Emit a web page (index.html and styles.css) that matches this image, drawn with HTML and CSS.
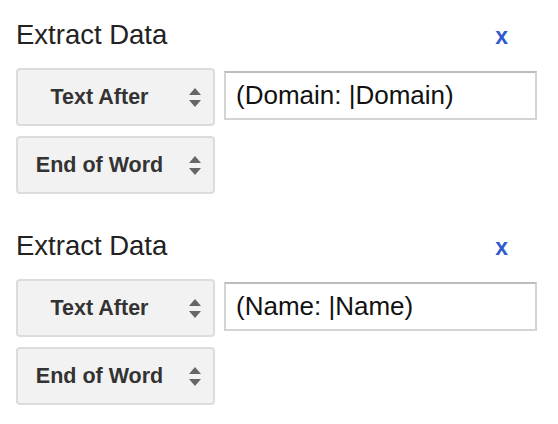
FILE: index.html
```html
<!DOCTYPE html>
<html lang="en">
<head>
    <meta charset="UTF-8">
    <meta name="viewport" content="width=device-width, initial-scale=1.0">
    <title>Extract Data</title>
    <link rel="stylesheet" href="styles.css">
</head>
<body>

    <div class="rules">
        <div class="rule">
            <div class="rule-head">
                <span class="rule-title">Extract Data</span>
                <a class="remove" href="#">x</a>
            </div>
            <div class="rule-row">
                <div class="picker">
                    <span class="picker-text">Text After</span>
                    <svg class="arrows" width="12" height="20" viewBox="0 0 12 20"><path d="M6 0 L12 7 L0 7 Z M0 12 L12 12 L6 19 Z" fill="#666"/></svg>
                </div>
                <div class="field">(Domain: |Domain)</div>
            </div>
            <div class="picker">
                <span class="picker-text">End of Word</span>
                <svg class="arrows" width="12" height="20" viewBox="0 0 12 20"><path d="M6 0 L12 7 L0 7 Z M0 12 L12 12 L6 19 Z" fill="#666"/></svg>
            </div>
        </div>

        <div class="rule">
            <div class="rule-head">
                <span class="rule-title">Extract Data</span>
                <a class="remove" href="#">x</a>
            </div>
            <div class="rule-row">
                <div class="picker">
                    <span class="picker-text">Text After</span>
                    <svg class="arrows" width="12" height="20" viewBox="0 0 12 20"><path d="M6 0 L12 7 L0 7 Z M0 12 L12 12 L6 19 Z" fill="#666"/></svg>
                </div>
                <div class="field">(Name: |Name)</div>
            </div>
            <div class="picker">
                <span class="picker-text">End of Word</span>
                <svg class="arrows" width="12" height="20" viewBox="0 0 12 20"><path d="M6 0 L12 7 L0 7 Z M0 12 L12 12 L6 19 Z" fill="#666"/></svg>
            </div>
        </div>
    </div>

</body>
</html>
```

FILE: styles.css
```css
body {
    margin: 0;
    background: #fff;
    font-family: "Liberation Sans", Arial, sans-serif;
}
.rules {
    padding: 20px 0 0 16px;
    width: 521px;
}
.rule {
    margin-bottom: 37px;
}
.rule-head {
    display: flex;
    justify-content: space-between;
    align-items: center;
    height: 30px;
    padding-right: 29px;
    margin-bottom: 18px;
}
.rule-title {
    font-size: 27.5px;
    line-height: 30px;
    color: #222;
}
.remove {
    font-size: 23px;
    font-weight: bold;
    color: #2f5ad0;
    text-decoration: none;
    margin-top: 2px;
}
.rule-row {
    display: flex;
    align-items: flex-start;
    gap: 9px;
    margin-bottom: 10px;
}
.picker {
    box-sizing: border-box;
    width: 199px;
    height: 58px;
    display: flex;
    align-items: center;
    padding: 0 12px 0 0;
    background: #f2f2f2;
    border: 2px solid #dcdcdc;
    border-radius: 4px;
}
.picker-text {
    flex: 1;
    text-align: center;
    font-size: 21.5px;
    font-weight: bold;
    color: #333;
}
.arrows {
    margin-left: 8px;
    margin-top: 2px;
}
.field {
    box-sizing: border-box;
    width: 313px;
    height: 49px;
    margin-top: 3px;
    padding: 0 10px;
    display: flex;
    align-items: center;
    font-size: 26px;
    color: #111;
    border: 2px solid #d4d4d4;
    border-top-color: #bdbdbd;
    background: #fff;
}
```
